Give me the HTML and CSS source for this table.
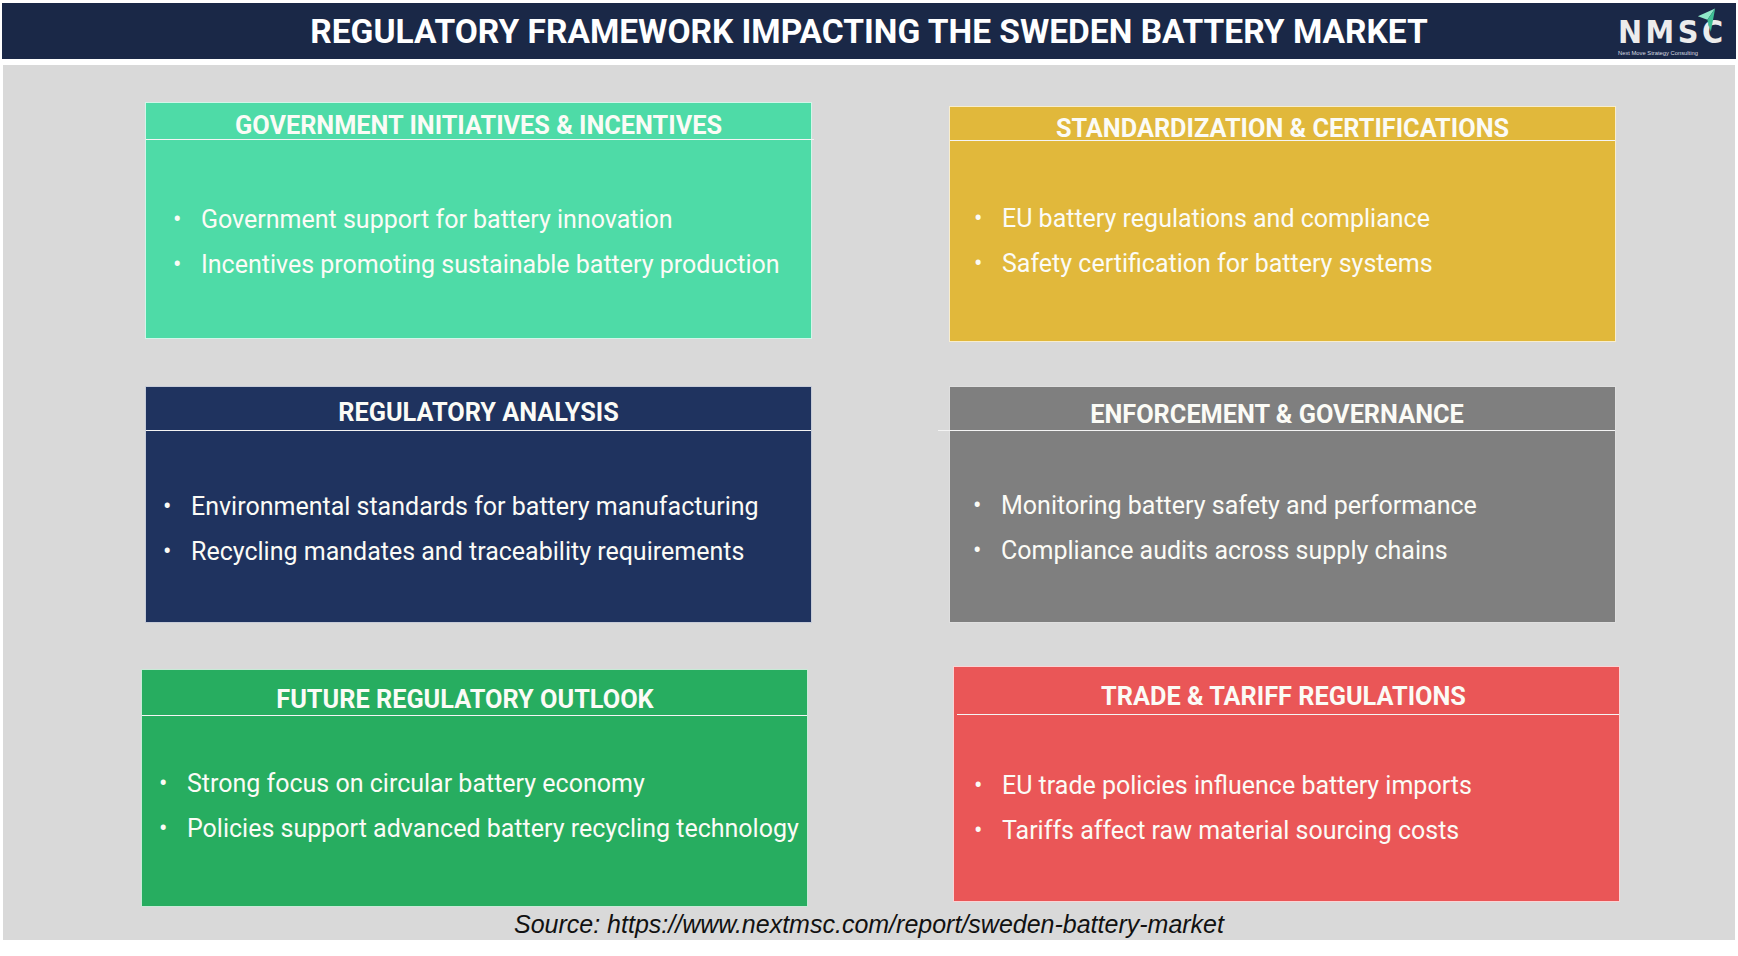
FILE: index.html
```html
<!DOCTYPE html>
<html lang="en">
<head>
<meta charset="utf-8">
<title>Regulatory Framework Impacting the Sweden Battery Market</title>
<link rel="stylesheet" href="styles.css">
</head>
<body>
<header class="topbar">
  <h1 class="title">REGULATORY FRAMEWORK IMPACTING THE SWEDEN BATTERY MARKET</h1>
  <div class="logo">
    <div class="logo-word">NMSC</div>
    <div class="logo-sub">Next Move Strategy Consulting</div>
    <svg class="logo-arrow" viewBox="0 0 22 30" width="19" height="27" aria-hidden="true">
      <polygon points="1,10 21,1 12,14" fill="#8fe8c8"/>
      <polygon points="12,14 21,1 16,28" fill="#3fbf95"/>
      <polygon points="12,14 16,28 13,20" fill="#2a9e7a"/>
    </svg>
  </div>
</header>

<main class="panel">
  <section class="grid">
    <article class="card c1">
      <div class="card-head">GOVERNMENT INITIATIVES &amp; INCENTIVES</div>
      <div class="rule"></div>
      <ul class="points">
        <li><span class="dot">•</span><span>Government support for battery innovation</span></li>
        <li><span class="dot">•</span><span>Incentives promoting sustainable battery production</span></li>
      </ul>
    </article>
    <article class="card c2">
      <div class="card-head">STANDARDIZATION &amp; CERTIFICATIONS</div>
      <div class="rule"></div>
      <ul class="points">
        <li><span class="dot">•</span><span>EU battery regulations and compliance</span></li>
        <li><span class="dot">•</span><span>Safety certification for battery systems</span></li>
      </ul>
    </article>
    <article class="card c3">
      <div class="card-head">REGULATORY ANALYSIS</div>
      <div class="rule"></div>
      <ul class="points">
        <li><span class="dot">•</span><span>Environmental standards for battery manufacturing</span></li>
        <li><span class="dot">•</span><span>Recycling mandates and traceability requirements</span></li>
      </ul>
    </article>
    <article class="card c4">
      <div class="card-head">ENFORCEMENT &amp; GOVERNANCE</div>
      <div class="rule"></div>
      <ul class="points">
        <li><span class="dot">•</span><span>Monitoring battery safety and performance</span></li>
        <li><span class="dot">•</span><span>Compliance audits across supply chains</span></li>
      </ul>
    </article>
    <article class="card c5">
      <div class="card-head">FUTURE REGULATORY OUTLOOK</div>
      <div class="rule"></div>
      <ul class="points">
        <li><span class="dot">•</span><span>Strong focus on circular battery economy</span></li>
        <li><span class="dot">•</span><span>Policies support advanced battery recycling technology</span></li>
      </ul>
    </article>
    <article class="card c6">
      <div class="card-head">TRADE &amp; TARIFF REGULATIONS</div>
      <div class="rule"></div>
      <ul class="points">
        <li><span class="dot">•</span><span>EU trade policies influence battery imports</span></li>
        <li><span class="dot">•</span><span>Tariffs affect raw material sourcing costs</span></li>
      </ul>
    </article>
  </section>
  <p class="source">Source: https://www.nextmsc.com/report/sweden-battery-market</p>
</main>
</body>
</html>
```

FILE: styles.css
```css
* { box-sizing: border-box; }

html, body {
  margin: 0;
  padding: 0;
  background: #ffffff;
}

body {
  width: 1738px;
  height: 956px;
  overflow: hidden;
  font-family: Roboto, "Liberation Sans", sans-serif;
}

/* ---------- top bar ---------- */
.topbar {
  margin: 3px 2px 0;
  height: 56px;
  background: #1a2847;
  display: grid;
  grid-template-columns: 1fr auto 1fr;
  align-items: center;
}

.title {
  grid-column: 2;
  margin: 0;
  padding-top: 2px;
  font-family: Roboto, "Liberation Sans", sans-serif;
  font-weight: 700;
  font-size: 33.5px;
  line-height: 40px;
  color: #ffffff;
  white-space: nowrap;
}

.logo {
  grid-column: 3;
  justify-self: end;
  align-self: start;
  position: relative;
  width: 98px;
  margin-right: 20px;
  padding-top: 16px;
}

.logo-word {
  font-family: "DejaVu Sans Condensed", "Liberation Sans", sans-serif;
  font-weight: 700;
  font-size: 32px;
  line-height: 27px;
  color: #ececec;
  letter-spacing: 3.5px;
}

.logo-sub {
  margin-top: 3px;
  font-family: "Liberation Sans", sans-serif;
  font-size: 5.8px;
  line-height: 8px;
  color: #d8dbe2;
  white-space: nowrap;
}

.logo-arrow {
  position: absolute;
  right: 0;
  top: 4px;
}

/* ---------- panel ---------- */
.panel {
  margin: 6px 3px 0;
  height: 875px;
  background: #d9d9d9;
  padding: 37px 0 0 142px;
}

.grid {
  display: grid;
  grid-template-columns: 667px 667px;
  grid-template-rows: 241px 237px 241px;
  column-gap: 137px;
  row-gap: 43px;
  align-items: start;
  justify-items: start;
}

.card {
  display: flex;
  flex-direction: column;
  width: 667px;
  height: var(--h, 237px);
  margin-top: var(--mt, 0);
  margin-left: var(--ml, 0);
  border: 1px solid rgba(255, 255, 255, 0.75);
  color: #fbfbf6;
}

.card-head {
  height: calc(var(--hh) - 1px);
  padding-top: var(--ht, 8px);
  padding-right: var(--hx, 0);
  display: flex;
  align-items: center;
  justify-content: center;
  font-weight: 700;
  font-size: 25.3px;
  white-space: nowrap;
}

.rule {
  height: 1px;
  background: #f4f4f4;
  margin-left: var(--rl, 0);
  margin-right: var(--rr, 0);
  flex: none;
}

.points {
  list-style: none;
  margin: 0;
  padding: var(--pt) 0 0 var(--pl);
  font-size: 25px;
  line-height: 45px;
}

.points li {
  display: flex;
  white-space: nowrap;
}

.dot {
  width: 28px;
  flex: none;
}

.c1 { background: #4edba7; --h: 237px; --hh: 37px; --ht: 8px; --pt: 57px; --pl: 27px; --rr: -3px; }
.c2 { background: #e1b83b; --h: 236px; --mt: 4px; --hh: 34px; --ht: 9px; --pt: 55px; --pl: 24px; }
.c3 { background: #1f335f; --h: 237px; --hh: 44px; --ht: 7px; --pt: 53px; --pl: 17px; }
.c4 { background: #7f7f7f; --h: 237px; --hh: 44px; --ht: 11px; --hx: 11px; --pt: 52px; --pl: 23px; --rl: -12px; }
.c5 { background: #27ad60; --h: 238px; --mt: 3px; --ml: -4px; --hh: 46px; --ht: 13px; --hx: 19px; --pt: 45px; --pl: 17px; }
.c6 { background: #ea5657; --h: 236px; --ml: 4px; --hh: 48px; --ht: 11px; --hx: 6px; --pt: 48px; --pl: 20px; --rl: 3px; }

/* ---------- source ---------- */
.source {
  margin: 3px 0 0 -142px;
  text-align: center;
  font-family: "Liberation Sans", Arial, sans-serif;
  font-style: italic;
  font-size: 25px;
  line-height: 29px;
  color: #111111;
}
```
